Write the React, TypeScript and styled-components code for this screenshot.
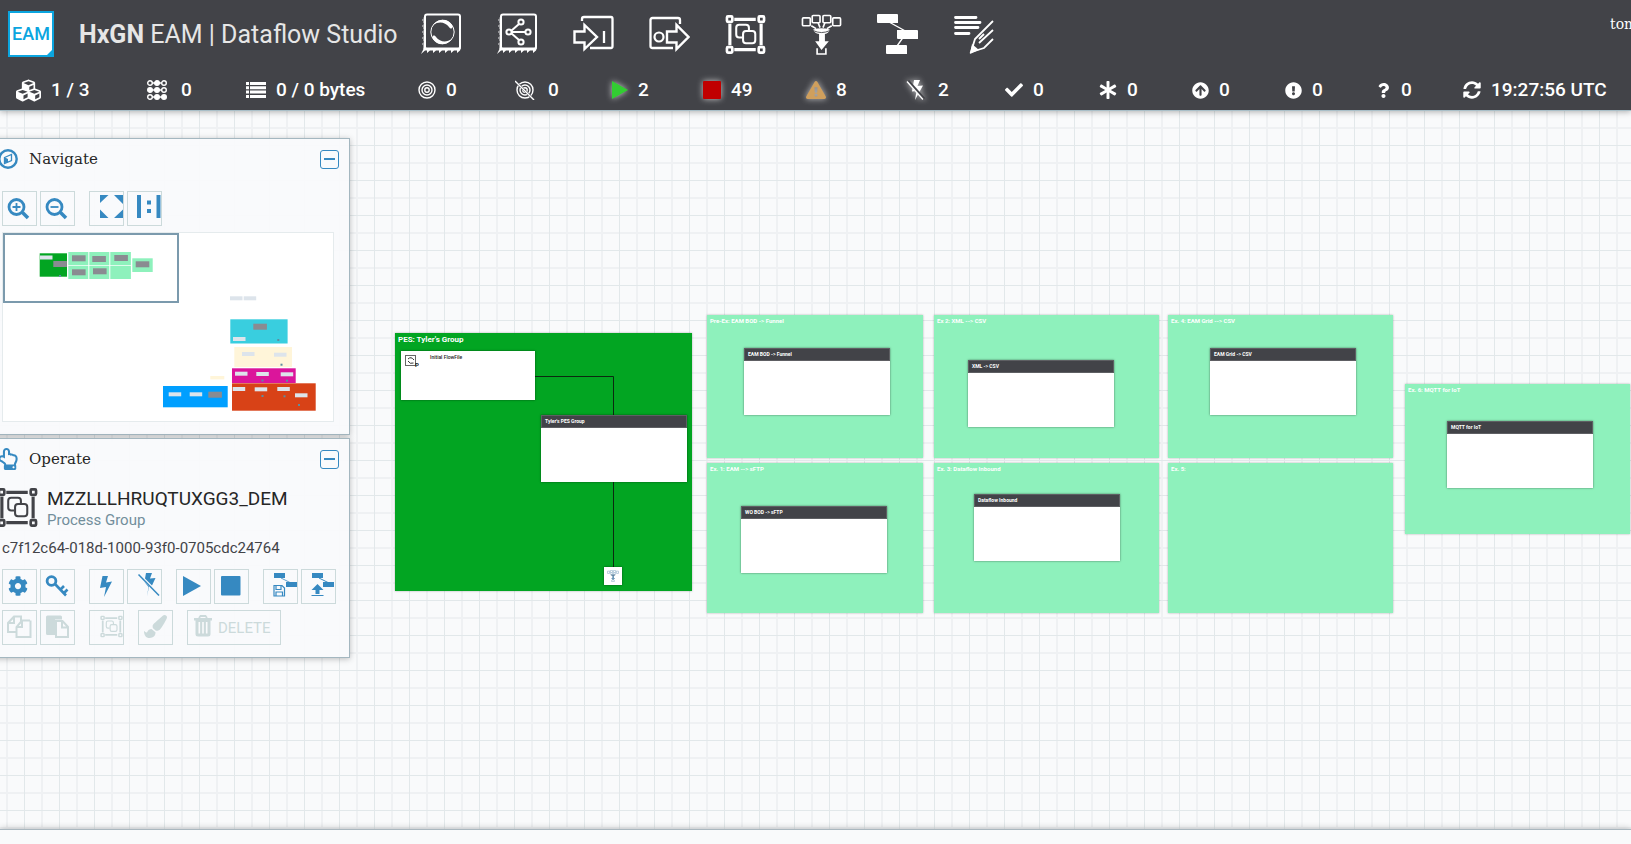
import React from 'react';
import styled, { createGlobalStyle, css } from 'styled-components';
import {
  FaAsterisk, FaArrowCircleUp, FaCheck, FaCog, FaCubes, FaExclamationCircle,
  FaExclamationTriangle, FaPaintBrush, FaQuestion, FaRegHandPointUp, FaSyncAlt,
} from 'react-icons/fa';

const BLUE = '#3689c1';
const DIM = '#ccdadb';
const DARK = '#424348';
const MINT = '#8ef1bc';
const FOREST = '#02a522';

const GlobalStyle = createGlobalStyle`
  * { box-sizing: border-box; }
  body { margin: 0; font-family: Roboto, "Liberation Sans", sans-serif; }
  button { font: inherit; padding: 0; cursor: pointer; }
  h1, h2, h3, p { margin: 0; font-weight: 400; }
`;

const Page = styled.div`
  height: 100vh;
  display: flex;
  flex-direction: column;
  overflow: hidden;
  background: #f9fafb;
`;

const Header = styled.header`
  position: relative;
  z-index: 3;
  flex: none;
  background: ${DARK};
  color: #fff;
  border-bottom: 1px solid #a9bfc8;
  box-shadow: 0 1px 6px rgba(0, 0, 0, 0.3);
`;

const Toolbar = styled.div`
  height: 68px;
  display: flex;
  align-items: center;
  padding-left: 8px;
`;

const Logo = styled.svg`
  width: 46px;
  height: 46px;
  flex: none;
`;

const Title = styled.h1`
  width: 342px;
  margin-left: 25px;
  padding-top: 2px;
  font-size: 25px;
  line-height: 32px;
  color: #e6e6e6;
  white-space: nowrap;
`;

const Tools = styled.div`
  display: flex;
  gap: 36px;
`;

const ToolButton = styled.button`
  width: 41px;
  height: 42px;
  margin-right: -1px;
  border: 0;
  background: none;
  color: #fff;
  svg { display: block; }
`;

const User = styled.span`
  align-self: flex-start;
  width: 21px;
  margin-left: auto;
  padding-top: 15px;
  overflow: hidden;
  white-space: nowrap;
  font: 14px/18px "DejaVu Serif", serif;
`;

const StatusBar = styled.div`
  height: 42px;
  display: grid;
  grid-template-columns:
    131fr 99fr 172fr 97fr 97fr 91fr 103fr 100fr
    99fr 94fr 93fr 93fr 91fr 87fr 141px;
  align-items: center;
  padding: 2px 27px 0 16px;
`;

const Status = styled.div<{ $tint?: string; $glow?: boolean }>`
  display: flex;
  align-items: center;
  gap: 10px;
  font-size: 19px;
  font-weight: 500;
  line-height: 24px;
  white-space: nowrap;
  svg {
    flex: none;
    color: ${(p) => p.$tint ?? '#fff'};
    ${(p) => p.$glow && css`filter: drop-shadow(0 0 3px rgba(255, 255, 255, 0.7));`}
  }
`;

const Canvas = styled.main`
  position: relative;
  flex: 1;
  overflow: hidden;
  background-color: #f9fafb;
  background-image:
    linear-gradient(to right, #e2e8ea 1px, transparent 1px),
    linear-gradient(to bottom, #e2e8ea 1px, transparent 1px),
    linear-gradient(to right, #eff1f3 2px, transparent 2px),
    linear-gradient(to bottom, #eff1f3 2px, transparent 2px);
  background-size: 35px 35px;
  background-position: 24px 0, 0 34px, 6px 0, 0 16px;
`;

const Panels = styled.aside`
  position: relative;
  z-index: 2;
  width: 360px;
  margin: 27px 0 0 -10px;
  display: flex;
  flex-direction: column;
  gap: 3px;
`;

const PanelBox = styled.section`
  padding: 0 10px 12px 12px;
  border: 1px solid #a4b7c0;
  background: rgba(249, 250, 252, 0.95);
  box-shadow: 0 1px 6px rgba(0, 0, 0, 0.25);
`;

const PanelHead = styled.header`
  display: flex;
  align-items: center;
  height: 40px;
  margin-left: -6px;
  color: ${BLUE};
`;

const PanelTitle = styled.h2`
  flex: 1;
  margin-left: 10px;
  font: 15px/20px "DejaVu Serif", serif;
  color: #262626;
`;

const Collapse = styled.button`
  width: 19px;
  height: 19px;
  display: grid;
  place-items: center;
  border: 1px solid ${BLUE};
  border-radius: 3px;
  background: none;
  &::before { content: ''; width: 11px; height: 2px; background: ${BLUE}; }
`;

const ButtonRow = styled.div`
  display: flex;
  gap: 14px;
  margin-left: -1px;
  & + & { margin-top: 6px; }
`;

const ButtonGroup = styled.div`
  display: flex;
  gap: 3px;
`;

const ActionButton = styled.button<{ $wide?: boolean }>`
  display: flex;
  align-items: center;
  width: ${(p) => (p.$wide ? '94px' : '35px')};
  height: 35px;
  overflow: hidden;
  border: 1px solid ${DIM};
  background: none;
  color: ${BLUE};
  font-size: 15px;
  &:disabled { color: ${DIM}; cursor: default; }
  svg { flex: none; display: block; }
`;

const MiniMap = styled.svg`
  display: block;
  width: 332px;
  height: 190px;
  margin: 6px 0 0 -1px;
  border: 1px solid #e5ebed;
  background: #fff;
`;

const NavTools = styled.div`
  padding-top: 12px;
`;

const Subject = styled.div`
  display: flex;
  gap: 9px;
  margin: 8px 0 10px -6px;
  color: ${DARK};
`;

const SubjectName = styled.h3`
  font-size: 19px;
  line-height: 24px;
  color: #262626;
`;

const SubjectType = styled.p`
  font-size: 15px;
  line-height: 18px;
  color: #728e9b;
`;

const SubjectId = styled.p`
  margin: 0 0 12px -1px;
  font-size: 15px;
  line-height: 18px;
  color: ${DARK};
`;

const Footer = styled.footer`
  position: relative;
  flex: none;
  height: 15px;
  border-top: 1px solid #aab7bf;
  background: #f9fafb;
  box-shadow: 0 -1px 6px rgba(0, 0, 0, 0.2);
`;

type Box = { $x: number; $y: number; $w: number; $h: number };

const placed = css<Box>`
  position: absolute;
  left: ${(p) => p.$x}px;
  top: ${(p) => p.$y}px;
  width: ${(p) => p.$w}px;
  height: ${(p) => p.$h}px;
`;

const LabelNode = styled.div<Box & { $fill: string; $large?: boolean }>`
  ${placed}
  padding: 1px 3px;
  background: ${(p) => p.$fill};
  box-shadow: 0 0 2px rgba(0, 0, 0, 0.3);
  color: #fff;
  font-size: ${(p) => (p.$large ? 8 : 6)}px;
  font-weight: 700;
  line-height: ${(p) => (p.$large ? 12 : 10)}px;
`;

const GroupNode = styled.div<Box>`
  ${placed}
  background: #fff;
  box-shadow: 0 0 2px rgba(0, 0, 0, 0.5);
`;

const GroupHead = styled.div`
  height: 13px;
  padding-left: 3px;
  background: ${DARK};
  border: 1px solid rgba(255, 255, 255, 0.15);
  color: #fff;
  font-size: 5px;
  font-weight: 700;
  line-height: 11px;
`;

const ProcessorNode = styled(GroupNode)`
  display: flex;
  align-items: flex-start;
  padding: 4px;
  gap: 11px;
  color: #222;
  font-size: 5px;
  font-weight: 500;
  line-height: 5px;
`;

const FunnelNode = styled(GroupNode)`
  display: grid;
  place-items: center;
  color: #6d97b8;
`;

const Wires = styled.svg`
  position: absolute;
  inset: 0;
  width: 100%;
  height: 100%;
`;

const stroke = (w: number) => ({ fill: 'none', stroke: 'currentColor', strokeWidth: w });

const Chip = ({ children }: { children?: React.ReactNode }) => (
  <svg width="41" height="42" viewBox="0 0 41 42" aria-hidden="true">
    <rect x="4" y="1.500" width="35" height="34.500" rx="2" {...stroke(2)} />
    <path fill="currentColor" d="M3 34.500H40L39 37.500L36 40V37.500H33L30 40V37.500H27L24 40V37.500H21L18 40V37.500H15L12 40V37.500H9L6 40V37.500H4L0 41L2 37Z" />
    <path fill="currentColor" d="M3 4L1 7.500H3ZM3 10L1 13.500H3ZM3 16L1 19.500H3ZM3 22L1 25.500H3ZM3 28L1 31.500H3ZM2.500 4H4V36H2.500Z" />
    {children}
  </svg>
);

const ProcessorIcon = () => (
  <Chip>
    <circle cx="21.500" cy="19" r="11.700" {...stroke(1)} />
    <path fill="currentColor" d="M12 12C17 5 27 5 31 12C33 15 30 17 28 14C24 9 18 8 12 12ZM31 26C26 33 16 33 12 26C10 23 13 21 15 24C19 29 25 30 31 26Z" />
  </Chip>
);

const InputIcon = () => (
  <Chip>
    <g {...stroke(2)}>
      <circle cx="12" cy="19" r="2.600" /><circle cx="24" cy="9" r="2.600" />
      <circle cx="24" cy="29" r="2.600" /><circle cx="31" cy="19" r="2.600" />
      <path d="M14.600 19H28.400M14 18L22 11M14 20L22 27" />
    </g>
  </Chip>
);

const InPortIcon = () => (
  <svg width="41" height="42" viewBox="0 0 41 42" aria-hidden="true">
    <path d="M9 8V6Q9 4 11 4H38Q39.500 4 39.500 6V33Q39.500 35 38 35H17" {...stroke(2.3)} />
    <path d="M1.500 18.500H11.500V12L24 24L11.500 36V29.500H1.500Z" {...stroke(2.4)} />
    <path d="M31 18V30" {...stroke(2.3)} />
  </svg>
);

const OutPortIcon = () => (
  <svg width="41" height="42" viewBox="0 0 41 42" aria-hidden="true">
    <path d="M31 11V7Q31 5 29 5H3.500Q1.500 5 1.500 7V33Q1.500 35 3.500 35H24" {...stroke(2.3)} />
    <circle cx="10" cy="24" r="4.500" {...stroke(2.2)} />
    <path d="M18 18.500H27.500V12L39.500 24L27.500 36V29.500H18Z" {...stroke(2.4)} />
  </svg>
);

const GroupArt = () => (
  <g fill="none" stroke="currentColor">
    <g strokeWidth="3.200">
      <path d="M9 5.500H31M9 36.500H31M4.500 10V32M36.500 10V32" />
    </g>
    <g strokeWidth="2.700">
      <rect x="1.500" y="2.500" width="5.500" height="5.500" rx="1" />
      <rect x="34" y="2.500" width="5.500" height="5.500" rx="1" />
      <rect x="1.500" y="34" width="5.500" height="5.500" rx="1" />
      <rect x="34" y="34" width="5.500" height="5.500" rx="1" />
    </g>
    <g strokeWidth="2.100">
      <path d="M17 24H14Q11 24 11 21V14Q11 11 14 11H21Q24 11 24 14V17" />
      <rect x="18" y="17.500" width="12.500" height="12.500" rx="3" />
    </g>
  </g>
);

const GroupIcon = ({ size = 41 }: { size?: number }) => (
  <svg width={size} height={size} viewBox="0 0 41 42" aria-hidden="true"><GroupArt /></svg>
);

const FunnelIcon = ({ size = 41 }: { size?: number }) => (
  <svg width={size} height={size} viewBox="0 0 41 42" aria-hidden="true">
    <g {...stroke(1.7)}>
      <rect x="1" y="4" width="8" height="8" rx="1" /><rect x="11" y="1.500" width="8" height="7.500" rx="1" />
      <rect x="22" y="1.500" width="8" height="7.500" rx="1" /><rect x="32" y="4" width="8" height="8" rx="1" />
      <path d="M10 12L15 15M17 9L19 14M24 9L22 14M31 12L26 15M16 35V41H25V35" />
    </g>
    <path fill="currentColor" d="M12 16Q20.500 13 29 16Q28 20 24 20.500V28H28L20.500 37L14 28H18V20.500Q13 20 12 16Z" />
    <path d="M12 17Q20.500 21 29 17" fill="none" stroke={DARK} strokeWidth="0.900" />
  </svg>
);

const TemplateIcon = () => (
  <svg width="41" height="42" viewBox="0 0 41 42" aria-hidden="true">
    <path d="M12 9L30 19L20 33" {...stroke(1.3)} />
    <path fill="currentColor" d="M1 1H20Q21 1 21 2V10H1Q0 10 0 9V2Q0 1 1 1ZM20 17H40Q41 17 41 18V26H21Q20 26 20 25ZM10 32H29Q30 32 30 33V41H10Q9 41 9 40V33Q9 32 10 32Z" />
  </svg>
);

const LabelIcon = () => (
  <svg width="41" height="42" viewBox="0 0 41 42" aria-hidden="true">
    <path d="M2.500 4.500H23M2.500 9.500H27M2.500 14.500H25M2.500 20.500H16" strokeLinecap="round" {...stroke(2.8)} />
    <path d="M40 8L22 26L18 39L31 35L40 26M40 17L26 30M31 21L26 26" {...stroke(1.8)} />
    <path fill="currentColor" d="M19 31L17 41L26 37Z" />
  </svg>
);

const TOOLS: [string, React.FC][] = [
  ['Processor', ProcessorIcon], ['Input', InputIcon], ['Input Port', InPortIcon],
  ['Output Port', OutPortIcon], ['Process Group', GroupIcon], ['Funnel', FunnelIcon],
  ['Template', TemplateIcon], ['Label', LabelIcon],
];

const ThreadsIcon = () => (
  <svg width="24" height="20" viewBox="0 0 24 20">
    <path d="M3 3H17M3 10H17M3 17H17" stroke="#fff" strokeWidth="1.500" />
    {[0, 1, 2].flatMap((r) => [0, 1, 2].map((c) => (
      <circle key={`${r}${c}`} cx={3 + c * 7} cy={3 + r * 7} r="2.300" stroke="#fff" strokeWidth="1.400"
        fill={(r === 0 && c === 1) || (r === 1 && c < 2) || (r === 2 && c > 0) ? '#fff' : DARK} />
    )))}
  </svg>
);

const QueueIcon = () => (
  <svg width="20" height="16" viewBox="0 0 20 16">
    <path fill="currentColor" d="M0 0H3V3H0ZM4 0H20V3H4ZM0 4.300H3V7.300H0ZM4 4.300H20V7.300H4ZM0 8.600H3V11.600H0ZM4 8.600H20V11.600H4ZM0 13H3V16H0ZM4 13H20V16H4Z" />
  </svg>
);

const TargetIcon = ({ off }: { off?: boolean }) => (
  <svg width={off ? 23 : 18} height="20" viewBox={off ? '-1 -1 23 20' : '0 -1 18 20'}>
    <g {...stroke(1.4)}>
      <circle cx="9" cy="9" r="8" /><circle cx="9" cy="9" r="5" /><circle cx="9" cy="9" r="2.200" />
      {off && <><path d="M0 1L17 18" stroke={DARK} strokeWidth="2" /><path d="M-1 0L18 19" /></>}
    </g>
  </svg>
);

const BoltOffIcon = () => (
  <svg width="22" height="20" viewBox="0 0 22 20">
    <path fill="currentColor" d="M8 0H14L11.500 6L17 5.500L9 20L10.500 11L6 11.500Z" />
    <path d="M2 1L18 19" stroke={DARK} strokeWidth="3" />
    <path d="M1 1.500L17 19.500" {...stroke(1.4)} />
  </svg>
);

const STATUSES: { icon: React.ReactNode; value: string; tint?: string; glow?: boolean }[] = [
  { icon: <FaCubes size={25} />, value: '1 / 3' },
  { icon: <ThreadsIcon />, value: '0' },
  { icon: <QueueIcon />, value: '0 / 0 bytes' },
  { icon: <TargetIcon />, value: '0' },
  { icon: <TargetIcon off />, value: '0' },
  { icon: <svg width="16" height="18" viewBox="0 0 16 18"><path fill="currentColor" d="M0 0L16 9L0 18Z" /></svg>, value: '2', tint: '#32cd32', glow: true },
  { icon: <svg width="18" height="18" viewBox="0 0 18 18"><rect width="18" height="18" rx="1" fill="currentColor" /></svg>, value: '49', tint: '#c00000', glow: true },
  { icon: <FaExclamationTriangle size={20} />, value: '8', tint: '#cf9f5d', glow: true },
  { icon: <BoltOffIcon />, value: '2', glow: true },
  { icon: <FaCheck size={18} />, value: '0' },
  { icon: <FaAsterisk size={18} />, value: '0' },
  { icon: <FaArrowCircleUp size={17} />, value: '0' },
  { icon: <FaExclamationCircle size={17} />, value: '0' },
  { icon: <FaQuestion size={15} />, value: '0' },
  { icon: <FaSyncAlt size={18} />, value: '19:27:56 UTC' },
];

const Art = ({ children, width = 33 }: { children: React.ReactNode; width?: number }) => (
  <svg width={width} height="33" viewBox={`1 1 ${width} 33`} aria-hidden="true">{children}</svg>
);

const Magnifier = ({ plus }: { plus?: boolean }) => (
  <Art>
    <circle cx="14.500" cy="16" r="7.500" {...stroke(2.8)} />
    <path d="M20.500 21.500L26 27" {...stroke(3.600)} />
    <path d={plus ? 'M10.500 16H18.500M14.500 12V20' : 'M10.500 16H18.500'} {...stroke(1.8)} />
  </Art>
);

const Bolt = 'M13.500 7H19L17 13.500L23 12.500L15 28L17 18L11 19Z';

const ART = {
  fit: <Art><path fill="currentColor" d="M11 4H19.500L11 12ZM25 4H34V13ZM11 18.500L19.500 27H11ZM34 18.500V27H25Z" /></Art>,
  actual: <Art><path fill="currentColor" d="M10 4H14V27H10ZM29.500 4H33.500V27H29.500ZM20 9.500H24V13.500H20ZM20 18H24V22H20Z" /></Art>,
  gear: <Art><FaCog x={6} y={7} size={20} /></Art>,
  key: (
    <Art>
      <circle cx="11.500" cy="12" r="4.400" {...stroke(2.8)} />
      <path d="M15 15L26 26.500M20 21L24 17M23.500 24.500L27.500 20.500" {...stroke(2.6)} />
    </Art>
  ),
  bolt: <Art><path fill="currentColor" d={Bolt} /></Art>,
  boltOff: (
    <Art>
      <path fill="currentColor" d="M19 4H25L23 9.500L28.500 9L25 16.500L18 9.500ZM17 12.500L22 17.500L20 27.500L21.500 18Z" />
      <path d="M11.500 5.500L32 26.500" {...stroke(1.5)} />
    </Art>
  ),
  play: <Art><path fill="currentColor" d="M7 7L25 17L7 27Z" /></Art>,
  stop: <Art><rect x="7" y="7" width="19.500" height="19.500" rx="1" fill="currentColor" /></Art>,
  save: (
    <Art>
      <path fill="currentColor" d="M11 4H22V9H11ZM23 13H34V18H23Z" />
      <path d="M18 9L27 13.500" {...stroke(0.8)} />
      <path d="M11 16.500H19L21.500 19V27H11ZM13 16.500V20.500H18V16.500M13 27V23H19.500V27" {...stroke(1.2)} />
    </Art>
  ),
  upload: (
    <Art>
      <path fill="currentColor" d="M11 4H22V9H11ZM22 13H33V18H22ZM16.500 15L22.500 21H18.500V25H14.500V21H10.500Z" />
      <path d="M18 9L27 13.500M10.500 26.500H22.500" {...stroke(1)} />
    </Art>
  ),
  copy: (
    <Art>
      <path d="M14 22H6V13L12 6.500H19V11M12 6.500V13H6M28 10.500H20L14.500 17V27H28.500V10.500M20 10.500V17H14.500" {...stroke(2)} />
    </Art>
  ),
  paste: (
    <Art>
      <path fill="currentColor" d="M6 7Q6 5.500 7.500 5.500H20.500Q22 5.500 22 7V9.500H15V25H7.500Q6 25 6 23.500Z" />
      <path d="M16 11H22.500L28 17V27H16ZM22 11V17.500H28" {...stroke(2)} />
    </Art>
  ),
  group: <Art><svg x="11" y="5" width="23" height="23" viewBox="0 0 41 42"><GroupArt /></svg></Art>,
  brush: <Art><FaPaintBrush x={6} y={5} size={23} /></Art>,
  trash: (
    <Art width={30}>
      <path fill="currentColor" d="M7 8H25V10.500H23.500V24Q23.500 26.500 21 26.500H11Q8.500 26.500 8.500 24V10.500H7Z" />
      <path d="M12 8L13.500 6H18.500L20 8" {...stroke(1.8)} />
      <path d="M12.300 12V23.500M16 12V23.500M19.700 12V23.500" stroke="#f9fafc" strokeWidth="1.600" />
    </Art>
  ),
};

type Action = { name: string; art: React.ReactNode; off?: boolean; label?: string };

const NAV_ACTIONS: Action[][] = [
  [{ name: 'Zoom In', art: <Magnifier plus /> }, { name: 'Zoom Out', art: <Magnifier /> }],
  [{ name: 'Fit', art: ART.fit }, { name: 'Actual Size', art: ART.actual }],
];

const OPERATE_ACTIONS: Action[][][] = [
  [
    [{ name: 'Configuration', art: ART.gear }, { name: 'Access Policies', art: ART.key }],
    [{ name: 'Enable', art: ART.bolt }, { name: 'Disable', art: ART.boltOff }],
    [{ name: 'Start', art: ART.play }, { name: 'Stop', art: ART.stop }],
    [{ name: 'Create Template', art: ART.save }, { name: 'Upload Template', art: ART.upload }],
  ],
  [
    [{ name: 'Copy', art: ART.copy, off: true }, { name: 'Paste', art: ART.paste, off: true }],
    [{ name: 'Group', art: ART.group, off: true }],
    [{ name: 'Change Color', art: ART.brush, off: true }],
    [{ name: 'Delete', art: ART.trash, off: true, label: 'DELETE' }],
  ],
];

const Actions = ({ groups }: { groups: Action[][] }) => (
  <ButtonRow>
    {groups.map((group) => (
      <ButtonGroup key={group[0].name}>
        {group.map((a) => (
          <ActionButton key={a.name} type="button" aria-label={a.name} disabled={a.off} $wide={!!a.label}>
            {a.art}{a.label}
          </ActionButton>
        ))}
      </ButtonGroup>
    ))}
  </ButtonRow>
);

// Overview rectangles: x, y, width, height, fill
const MINI: [number, number, number, number, string][] = [
  [36.7, 20.3, 27.3, 23.4, FOREST],
  [65.3, 19, 20, 13, MINT], [65.3, 32.7, 20, 13.3, MINT],
  [86.3, 19, 20, 13, MINT], [86.3, 32.7, 20, 13.3, MINT],
  [107.3, 19, 20.6, 13, MINT], [107.3, 32.7, 20.6, 13.3, MINT], [129.3, 25.3, 20.4, 13.7, MINT],
  [227.3, 86.3, 57.3, 24.2, '#39cedf'], [231.3, 114, 57.7, 20, '#fff5d9'],
  [207.3, 143, 14, 3.4, '#fff5d9'], [229, 135.3, 63.7, 14.7, '#db159b'],
  [160, 153, 64.7, 21.3, '#009fff'], [229, 150.3, 83.7, 27.4, '#d84217'],
];
const MINI_GROUPS = [[50.3, 28], [69, 22.3], [89.3, 23], [111.3, 22], [69, 36.3], [90, 35.3], [132.7, 28.3], [250.3, 90.7], [205.3, 158.7]];
const MINI_PROCESSORS = [
  [37, 22.5], [227, 63.3], [240.7, 63.3], [230, 104], [239, 119], [271, 119.7], [232, 138.7], [253.3, 139],
  [277.7, 139.3], [165.7, 159.3], [186.7, 159.3], [229.7, 154], [251.7, 154.3], [274.3, 154], [292, 160.3],
];
const MINI_FUNNELS = [[56, 42], [274.3, 106], [277.5, 130.7], [258.5, 146.5], [283, 146.7], [258.5, 162], [280.5, 162.3], [295, 171]];

type Area = { title: string; x: number; y: number; w: number; h: number; group?: { title: string; x: number; y: number } };

const AREAS: Area[] = [
  { title: 'Pre-Ex: EAM BOD -> Funnel', x: 707, y: 204, w: 216, h: 143, group: { title: 'EAM BOD -> Funnel', x: 744, y: 237 } },
  { title: 'Ex. 1: EAM --> sFTP', x: 707, y: 352, w: 216, h: 150, group: { title: 'WO BOD -> sFTP', x: 741, y: 395 } },
  { title: 'Ex 2: XML --> CSV', x: 934, y: 204, w: 225, h: 143, group: { title: 'XML -> CSV', x: 968, y: 249 } },
  { title: 'Ex. 3: Dataflow Inbound', x: 934, y: 352, w: 225, h: 150, group: { title: 'Dataflow Inbound', x: 974, y: 383 } },
  { title: 'Ex. 4: EAM Grid --> CSV', x: 1168, y: 204, w: 225, h: 143, group: { title: 'EAM Grid -> CSV', x: 1210, y: 237 } },
  { title: 'Ex. 5:', x: 1168, y: 352, w: 225, h: 150 },
  { title: 'Ex. 6: MQTT for IoT', x: 1405, y: 273, w: 225, h: 150, group: { title: 'MQTT for IoT', x: 1447, y: 310 } },
];

const Group = ({ title, x, y }: { title: string; x: number; y: number }) => (
  <GroupNode $x={x} $y={y} $w={146} $h={67}><GroupHead>{title}</GroupHead></GroupNode>
);

export default function App() {
  return (
    <Page>
      <GlobalStyle />
      <Header>
        <Toolbar>
          <Logo viewBox="0 0 46 46" role="img" aria-label="EAM">
            <rect x="1" y="1" width="44" height="44" fill="#fff" stroke="#0ba5df" strokeWidth="2" />
            <path d="M46 37V46H37Z" fill="#0ba5df" />
            <text x="23" y="29" textAnchor="middle" fontFamily="Roboto, sans-serif" fontWeight="500" fontSize="18" fill="#0ba5df">EAM</text>
          </Logo>
          <Title><b>HxGN</b> EAM | Dataflow Studio</Title>
          <Tools>
            {TOOLS.map(([name, Icon]) => (
              <ToolButton key={name} type="button" aria-label={name}><Icon /></ToolButton>
            ))}
          </Tools>
          <User>tom</User>
        </Toolbar>
        <StatusBar>
          {STATUSES.map((s, i) => (
            <Status key={i} $tint={s.tint} $glow={s.glow}>{s.icon}<span>{s.value}</span></Status>
          ))}
        </StatusBar>
      </Header>

      <Canvas>
        <LabelNode $x={395} $y={222} $w={297} $h={258} $fill={FOREST} $large>PES: Tyler's Group</LabelNode>
        {AREAS.map((a) => (
          <React.Fragment key={a.title}>
            <LabelNode $x={a.x} $y={a.y} $w={a.w} $h={a.h} $fill={MINT}>{a.title}</LabelNode>
            {a.group && <Group {...a.group} />}
          </React.Fragment>
        ))}
        <Wires aria-hidden="true">
          <path d="M535 265.500H613.500V456" fill="none" stroke="#0b2a10" />
        </Wires>
        <ProcessorNode $x={401} $y={240} $w={134} $h={49}>
          <svg width="14" height="14" viewBox="0 0 14 14" aria-hidden="true">
            <rect x="0.500" y="0.500" width="10" height="10" fill="none" stroke="#666" />
            <path d="M3 4Q6 1 9 5M8.500 8Q5 9.500 3 6" fill="none" stroke="#333" />
            <text x="10" y="12" fontSize="6" fontWeight="700" fontFamily="Roboto, sans-serif" fill="#222">P</text>
          </svg>
          <span>Initial FlowFile</span>
        </ProcessorNode>
        <Group title="Tyler's PES Group" x={541} y={304} />
        <FunnelNode $x={604} $y={456} $w={18} $h={18}><FunnelIcon size={12} /></FunnelNode>

        <Panels>
          <PanelBox>
            <PanelHead>
              <svg width="22" height="22" viewBox="0 0 22 22" aria-hidden="true">
                <circle cx="11" cy="11" r="8.700" {...stroke(2.4)} />
                <path d="M7.500 9.500L14.500 6.500V12.500L7.500 15.500Z" {...stroke(1.3)} />
                <path d="M8 9.500L11 11V14L8 15Z" fill="currentColor" />
              </svg>
              <PanelTitle>Navigate</PanelTitle>
              <Collapse type="button" aria-label="Collapse Navigate" />
            </PanelHead>
            <NavTools><Actions groups={NAV_ACTIONS} /></NavTools>
            <MiniMap viewBox="0 0 330 188" role="img" aria-label="Flow overview">
              {MINI.map(([x, y, w, h, fill], i) => <rect key={i} x={x} y={y} width={w} height={h} fill={fill} />)}
              {MINI_PROCESSORS.map(([x, y], i) => <rect key={i} x={x} y={y} width="12.500" height="4" fill="#dde4eb" />)}
              {MINI_GROUPS.map(([x, y], i) => <rect key={i} x={x} y={y} width="13.600" height="6" fill="#8a8b91" />)}
              {MINI_FUNNELS.map(([x, y], i) => <rect key={i} x={x} y={y} width="2" height="2" fill="#5d8ea0" />)}
              <rect x="1" y="1" width="174" height="68" fill="none" stroke="#7b9aad" strokeWidth="2" />
            </MiniMap>
          </PanelBox>

          <PanelBox>
            <PanelHead>
              <FaRegHandPointUp size={22} aria-hidden="true" />
              <PanelTitle>Operate</PanelTitle>
              <Collapse type="button" aria-label="Collapse Operate" />
            </PanelHead>
            <Subject>
              <GroupIcon />
              <div>
                <SubjectName>MZZLLLHRUQTUXGG3_DEM</SubjectName>
                <SubjectType>Process Group</SubjectType>
              </div>
            </Subject>
            <SubjectId>c7f12c64-018d-1000-93f0-0705cdc24764</SubjectId>
            {OPERATE_ACTIONS.map((groups, i) => <Actions key={i} groups={groups} />)}
          </PanelBox>
        </Panels>
      </Canvas>
      <Footer />
    </Page>
  );
}
